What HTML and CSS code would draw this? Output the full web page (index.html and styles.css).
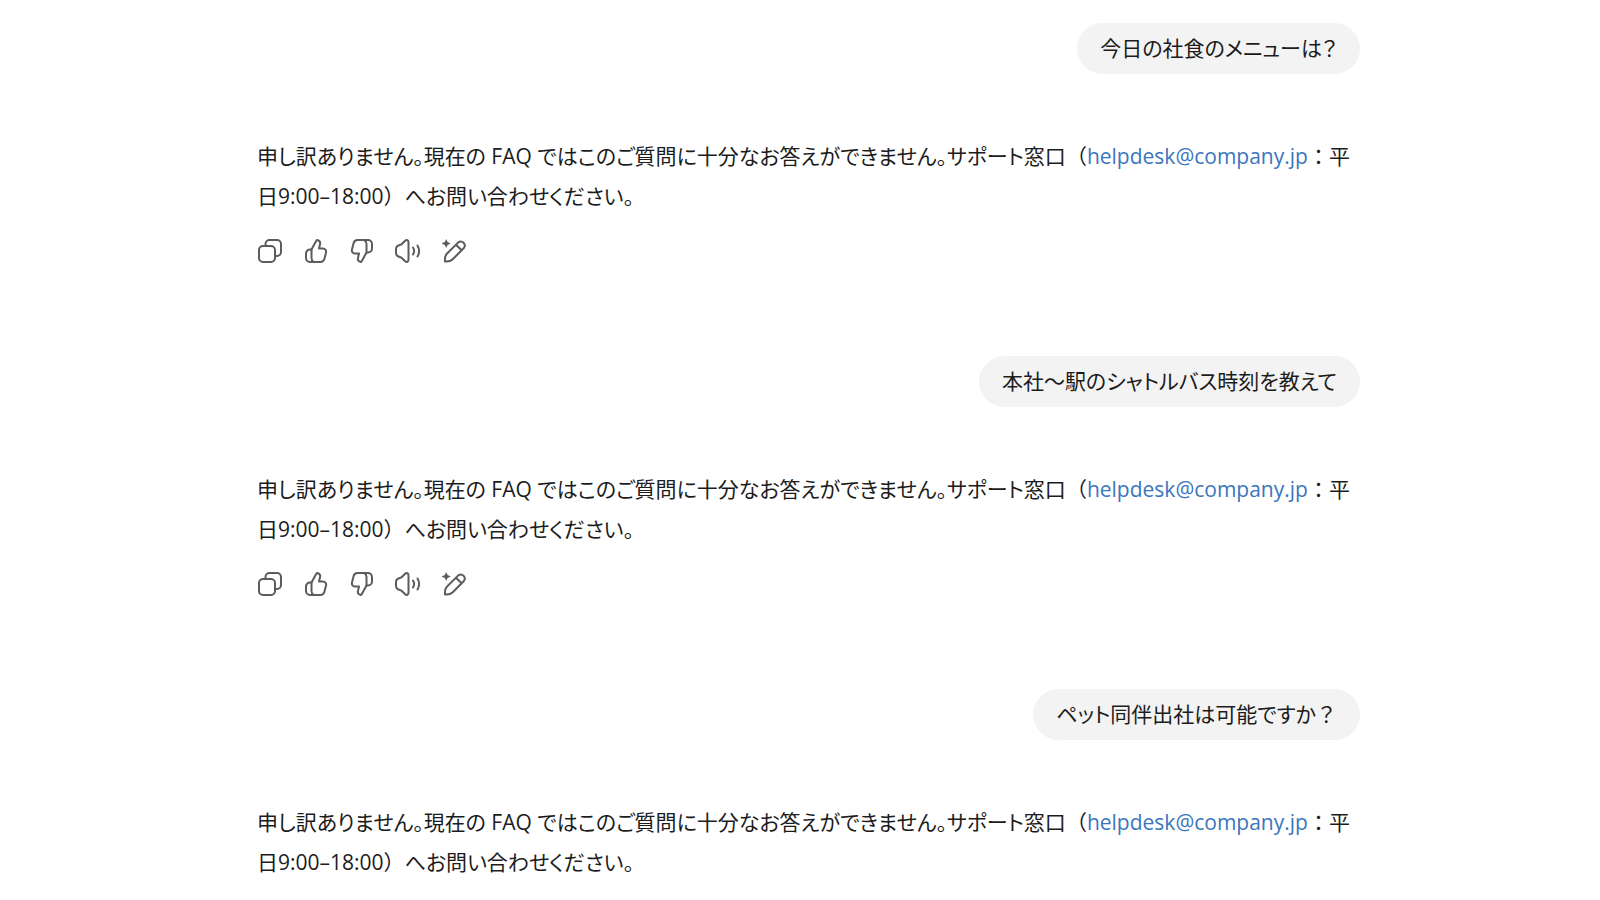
FILE: index.html
```
<!DOCTYPE html>
<html lang="ja">
<head>
    <meta charset="UTF-8">
    <meta name="viewport" content="width=device-width, initial-scale=1.0">
    <title>FAQ チャット</title>
    <link rel="stylesheet" href="styles.css">
</head>
<body>
    <!-- Icons shared by every reply -->
    <svg class="sprite" aria-hidden="true">
        <symbol id="icon-copy" viewBox="0 0 24 24">
            <rect x="1" y="7" width="16" height="16" rx="4"/>
            <path d="M7.500 7V5a4 4 0 0 1 4-4H19a4 4 0 0 1 4 4v8a4 4 0 0 1-4 4h-2"/>
        </symbol>
        <symbol id="icon-like" viewBox="0 0 24 24">
            <path d="M7.500 10.500 12.300 1.800c.3-.6.9-.8 1.500-.6 1.800.6 2.700 2.200 2.200 4L15 9.500h3.800c2.300 0 3.800 1.900 3.200 4.100l-1.500 6c-.5 2-1.900 3.400-4 3.400H6a4 4 0 0 1-4-4v-4.500a4 4 0 0 1 4-4z"/>
            <path d="M7.500 10.500v8.500c0 2 .7 3.200 2.200 4"/>
        </symbol>
        <symbol id="icon-dislike" viewBox="0 0 24 24">
            <path d="M16.500 13.500 11.700 22.200c-.3.6-.9.800-1.500.6-1.800-.6-2.700-2.200-2.200-4L9 14.500H5.200c-2.300 0-3.800-1.900-3.200-4.100l1.500-6C4 2.400 5.400 1 7.500 1H18a4 4 0 0 1 4 4v4.500a4 4 0 0 1-4 4z"/>
            <path d="M16.500 13.500V5c0-2-.7-3.200-2.200-4"/>
        </symbol>
        <symbol id="icon-speaker" viewBox="0 0 26 24">
            <path d="M13.500 3.200v17.600c0 2-1.900 2.700-3.300 1.500L6.800 19c-.6-.6-1.200-.8-2-1C2.300 17.400 1 16.200 1 13.800v-3.600C1 7.800 2.300 6.600 4.800 6c.8-.2 1.400-.4 2-1l3.400-3.300c1.400-1.200 3.300-.5 3.300 1.500z"/>
            <path d="M18 8.500a6.500 6.500 0 0 1 0 7M22.500 6.500a11 11 0 0 1 0 11"/>
        </symbol>
        <symbol id="icon-edit" viewBox="0 0 24 24">
            <path d="M3 22.500c-.2-2.700 0-5.800 1.800-7.700L16.300 3.400a4 4 0 0 1 5.600 5.600L10.500 20.500c-1.900 1.900-4.800 2.200-7.500 2zM14 5.700l5.600 5.600"/>
            <path class="spark" d="M4.200 0 5.600 3.100 8.700 4.500 5.600 5.900 4.200 9 2.800 5.900-.3 4.500 2.800 3.100z"/>
        </symbol>
    </svg>

    <main class="thread">
        <section class="turn">
            <p class="question">今日の社食のメニューは？</p>
            <div class="answer">
                <p>申し訳ありません。現在の FAQ ではこのご質問に十分なお答えができません。サポート窓口<span class="full">（</span><a href="mailto:helpdesk@company.jp">helpdesk@company.jp</a><span class="full">：</span>平日9:00–18:00<span class="full">）</span>へお問い合わせください。</p>
                <div class="actions">
                    <button type="button" aria-label="コピー"><svg><use href="#icon-copy"/></svg></button>
                    <button type="button" aria-label="良い回答"><svg><use href="#icon-like"/></svg></button>
                    <button type="button" aria-label="良くない回答"><svg><use href="#icon-dislike"/></svg></button>
                    <button type="button" aria-label="読み上げる"><svg class="wide"><use href="#icon-speaker"/></svg></button>
                    <button type="button" aria-label="編集"><svg><use href="#icon-edit"/></svg></button>
                </div>
            </div>
        </section>

        <section class="turn">
            <p class="question">本社～駅のシャトルバス時刻を教えて</p>
            <div class="answer">
                <p>申し訳ありません。現在の FAQ ではこのご質問に十分なお答えができません。サポート窓口<span class="full">（</span><a href="mailto:helpdesk@company.jp">helpdesk@company.jp</a><span class="full">：</span>平日9:00–18:00<span class="full">）</span>へお問い合わせください。</p>
                <div class="actions">
                    <button type="button" aria-label="コピー"><svg><use href="#icon-copy"/></svg></button>
                    <button type="button" aria-label="良い回答"><svg><use href="#icon-like"/></svg></button>
                    <button type="button" aria-label="良くない回答"><svg><use href="#icon-dislike"/></svg></button>
                    <button type="button" aria-label="読み上げる"><svg class="wide"><use href="#icon-speaker"/></svg></button>
                    <button type="button" aria-label="編集"><svg><use href="#icon-edit"/></svg></button>
                </div>
            </div>
        </section>

        <section class="turn">
            <p class="question">ペット同伴出社は可能ですか<span class="full">？</span></p>
            <div class="answer">
                <p>申し訳ありません。現在の FAQ ではこのご質問に十分なお答えができません。サポート窓口<span class="full">（</span><a href="mailto:helpdesk@company.jp">helpdesk@company.jp</a><span class="full">：</span>平日9:00–18:00<span class="full">）</span>へお問い合わせください。</p>
            </div>
        </section>
    </main>
</body>
</html>
```
FILE: styles.css
```
* {
    box-sizing: border-box;
}
body {
    margin: 0;
    background: #fff;
    color: #1c1c1c;
    font-family: "Open Sans", "Noto Sans CJK JP", sans-serif;
    font-size: 21px;
    line-height: 40px;
    /* proportional kana */
    font-feature-settings: "palt";
}
p {
    margin: 0;
}
a {
    color: #3b76bd;
    text-decoration: none;
}
/* punctuation that keeps its full width */
.full {
    font-feature-settings: normal;
}
.sprite {
    display: none;
}
.thread {
    max-width: 1120px;
    margin: 0 auto;
    padding: 23px 0 0 17px;
}
.turn {
    display: flex;
    flex-direction: column;
    gap: 62px;
    margin-bottom: 82px;
}
.turn:last-child {
    margin-bottom: 0;
}
.question {
    align-self: flex-end;
    padding: 5px 23px 6px;
    border-radius: 26px;
    background: #f3f3f3;
}
.actions {
    display: flex;
    margin: 12px 0 0 -10px;
}
.actions button {
    display: flex;
    align-items: center;
    justify-content: center;
    width: 46px;
    height: 46px;
    padding: 0;
    border: 0;
    border-radius: 10px;
    background: none;
    color: #5c5c5c;
    cursor: pointer;
}
.actions button:hover {
    background: #f3f3f3;
}
.actions svg {
    width: 24px;
    height: 24px;
    fill: none;
    stroke: currentColor;
    stroke-width: 2;
    stroke-linecap: round;
    stroke-linejoin: round;
}
.actions svg.wide {
    width: 26px;
}
.spark {
    fill: currentColor;
    stroke: none;
}
```
